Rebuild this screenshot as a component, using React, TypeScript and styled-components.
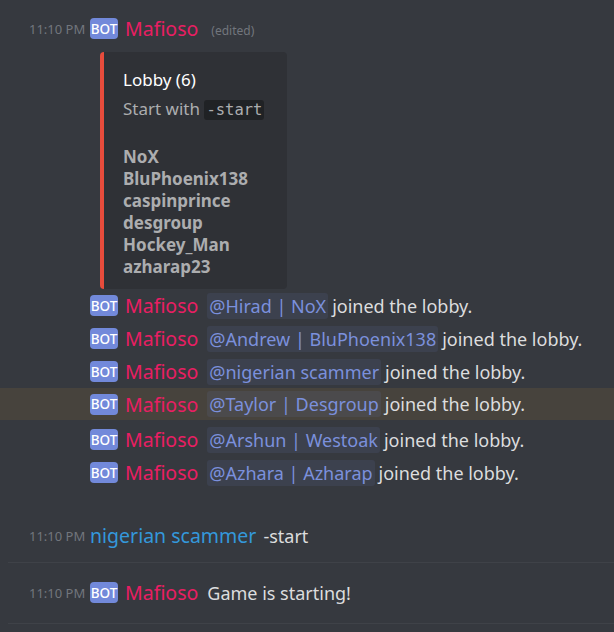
import React from "react";
import styled, { createGlobalStyle } from "styled-components";

const Global = createGlobalStyle`
  html, body { margin: 0; padding: 0; background: #36393f; }
  body { font-family: "Noto Sans", "Open Sans", sans-serif; width: 614px; height: 632px; overflow: hidden; }
`;

const Chat = styled.div`
  display: flex;
  flex-direction: column;
  width: 614px;
`;

const Group = styled.section<{ $pt: number; $pb: number; $divider?: boolean }>`
  display: flex;
  flex-direction: column;
  padding-top: ${(p) => p.$pt}px;
  padding-bottom: ${(p) => p.$pb}px;
  margin-left: 8px;
  border-bottom: ${(p) => (p.$divider ? "1px solid #3f4248" : "none")};
`;

const Row = styled.div<{ $highlight?: boolean; $h?: number; $mt?: number }>`
  display: flex;
  align-items: center;
  height: ${(p) => p.$h ?? 33}px;
  margin-top: ${(p) => p.$mt ?? 0}px;
  margin-left: -8px;
  padding-left: 8px;
  background: ${(p) => (p.$highlight ? "#47433d" : "transparent")};
`;

const Gutter = styled.div`
  width: 82px;
  flex: none;
  box-sizing: border-box;
  padding-left: 21px;
  font-size: 13px;
  color: #72767d;
  white-space: nowrap;
`;

const Badge = styled.span`
  flex: none;
  display: inline-flex;
  align-items: center;
  justify-content: center;
  width: 28px;
  height: 21px;
  border-radius: 4px;
  background: #7289da;
  color: #fff;
  font-size: 13.5px;
  font-weight: 500;
  margin-right: 7px;
`;

const Name = styled.span<{ $color: string; $gap?: number }>`
  color: ${(p) => p.$color};
  font-size: 19.5px;
  margin-right: ${(p) => p.$gap ?? 9}px;
  white-space: nowrap;
`;

const Edited = styled.span`
  color: #72767d;
  font-size: 12px;
  margin-left: 4px;
  margin-top: 4px;
`;

const Text = styled.span`
  color: #dcddde;
  font-size: 18px;
  white-space: nowrap;
`;

const Mention = styled.span`
  background: rgba(114, 137, 218, 0.1);
  color: #7b90dc;
  padding: 1px 2px;
  margin-right: 4px;
  border-radius: 3px;
`;

const Embed = styled.div`
  margin: 7px 0 0 92px;
  width: 187px;
  box-sizing: border-box;
  background: #2f3136;
  border-left: 4px solid #e74c3c;
  border-radius: 4px;
  padding: 17px 12px 11px 19px;
`;

const EmbedTitle = styled.div`
  color: #ffffff;
  font-size: 17px;
  font-weight: 400;
  line-height: 22px;
  margin-bottom: 7px;
`;

const EmbedDesc = styled.div`
  color: #acadaf;
  font-size: 17px;
  line-height: 22px;
`;

const Code = styled.code`
  font-family: "DejaVu Sans Mono", monospace;
  font-size: 15.5px;
  background: #202225;
  padding: 1px 2px;
  border-radius: 3px;
`;

const Strong = styled.strong`
  font-weight: 700;
  display: block;
`;

const Spacer = styled.div`
  height: 25px;
`;

const joins = [
  "@Hirad | NoX",
  "@Andrew | BluPhoenix138",
  "@nigerian scammer",
  "@Taylor | Desgroup",
  "@Arshun | Westoak",
  "@Azhara | Azharap",
];

const names = ["NoX", "BluPhoenix138", "caspinprince", "desgroup", "Hockey_Man", "azharap23"];

const PINK = "#e91e63";

export default function App() {
  return (
    <Chat>
      <Global />
      <Group $pt={12} $pb={30}>
        <Row>
          <Gutter>11:10 PM</Gutter>
          <Badge>BOT</Badge>
          <Name $color={PINK}>Mafioso</Name>
          <Edited>(edited)</Edited>
        </Row>
        <Embed>
          <EmbedTitle>Lobby (6)</EmbedTitle>
          <EmbedDesc>
            Start with <Code>-start</Code>
            <Spacer />
            {names.map((n) => (
              <Strong key={n}>{n}</Strong>
            ))}
          </EmbedDesc>
        </Embed>
        {joins.map((j, i) => (
          <Row key={j} $highlight={i === 3} $h={i === 3 ? 32 : 33} $mt={i === 4 ? 3 : 0}>
            <Gutter />
            <Badge>BOT</Badge>
            <Name $color={PINK}>Mafioso</Name>
            <Text>
              <Mention>{j}</Mention>joined the lobby.
            </Text>
          </Row>
        ))}
      </Group>
      <Group $pt={0} $pb={10} $divider>
        <Row>
          <Gutter>11:10 PM</Gutter>
          <Name $color="#3498db" $gap={7}>nigerian scammer</Name>
          <Text>-start</Text>
        </Row>
      </Group>
      <Group $pt={13} $pb={14} $divider>
        <Row>
          <Gutter>11:10 PM</Gutter>
          <Badge>BOT</Badge>
          <Name $color={PINK}>Mafioso</Name>
          <Text>Game is starting!</Text>
        </Row>
      </Group>
    </Chat>
  );
}
